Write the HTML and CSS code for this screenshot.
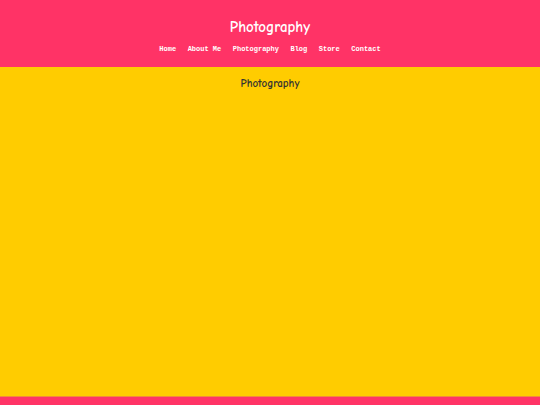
FILE: index.html
```html
<!DOCTYPE html>
<html>
<head>
<meta charset="utf-8">
<link rel="stylesheet" href="styles.css">
</head>
<body>
<header class="site-header">
  <h1 class="site-title">Photography</h1>
  <nav class="nav">
    <a href="#">Home</a>
    <a href="#">About Me</a>
    <a href="#">Photography</a>
    <a href="#">Blog</a>
    <a href="#">Store</a>
    <a href="#">Contact</a>
  </nav>
</header>
<main class="content">
  <h2 class="page-title">Photography</h2>
</main>
<footer class="site-footer"></footer>
</body>
</html>
```
FILE: styles.css
```css
html, body {
  margin: 0;
  padding: 0;
  height: 100%;
}
body {
  display: flex;
  flex-direction: column;
  background: #ffcc00;
  font-family: "Comic Sans MS", "Comic Neue", "DejaVu Sans", sans-serif;
}
.site-header {
  background: #ff3366;
  height: 67px;
  box-sizing: border-box;
  padding-top: 17px;
  text-align: center;
}
.site-title {
  margin: 0;
  color: #ffffff;
  font-size: 15px;
  line-height: 20px;
  font-weight: bold;
}
.nav {
  margin-top: 8px;
  display: flex;
  justify-content: center;
  gap: 11.5px;
}
.nav a {
  font-family: "Liberation Mono", "Courier New", monospace;
  font-weight: bold;
  font-size: 7px;
  line-height: 8px;
  color: #ffffff;
  text-decoration: none;
}
.content {
  flex: 1;
  text-align: center;
}
.page-title {
  margin: 9px 0 0;
  font-size: 11px;
  line-height: 16px;
  font-weight: bold;
  color: #333333;
}
.site-footer {
  height: 8px;
  background: #ff3366;
  border-top: 1px solid #f08a3c;
}
```
